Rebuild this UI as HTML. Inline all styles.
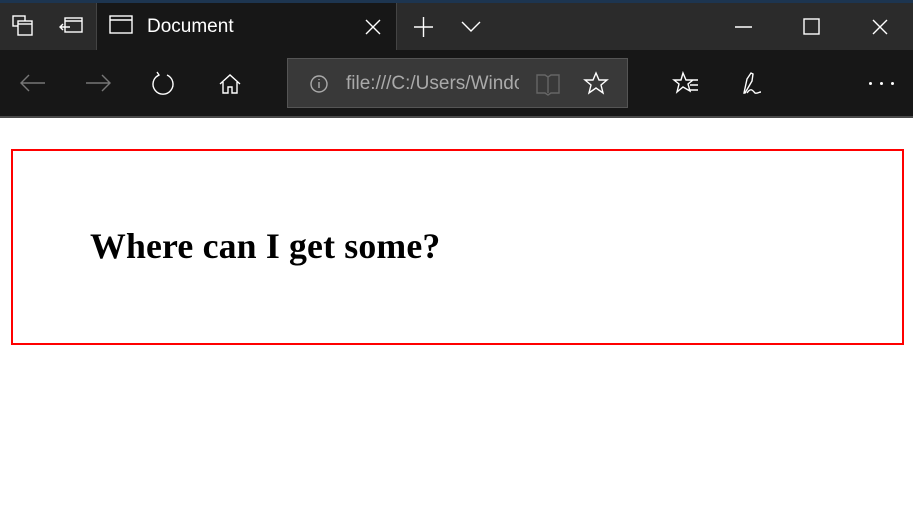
<!DOCTYPE html>
<html><head><style>
body{margin:0;width:913px;height:514px;overflow:hidden;background:#fff;font-family:"Liberation Sans",sans-serif;position:relative}
.a{position:absolute}
svg{position:absolute;overflow:visible}
</style></head><body>
<div class="a" style="left:0;top:0;width:913px;height:3px;background:#1d3550"></div>
<div class="a" style="left:0;top:3px;width:913px;height:47px;background:#2b2b2b"></div>
<div class="a" style="left:96px;top:3px;width:301px;height:47px;background:#171717;border-left:1px solid #444;border-right:1px solid #444;box-sizing:border-box"></div>
<div class="a" style="left:0;top:50px;width:913px;height:66px;background:#171717"></div>
<div class="a" style="left:0;top:116px;width:913px;height:2px;background:#4a4a4a"></div>
<div class="a" style="left:287px;top:58px;width:341px;height:50px;background:#393939;border:1px solid #555;box-sizing:border-box"></div>
<div class="a" style="left:147px;top:16px;color:#fff;font-size:19px">Document</div>
<div class="a" style="left:346px;top:73px;color:#aaa;font-size:19px;width:173px;overflow:hidden;white-space:nowrap">file:///C:/Users/Windows</div>
<svg width="913" height="120" style="left:0;top:0" fill="none" stroke="#fff" stroke-width="1.4">
<rect x="13" y="16" width="12" height="10"/><rect x="18" y="21" width="14" height="14" fill="#2b2b2b"/><line x1="18" y1="24" x2="32" y2="24"/>
<rect x="65" y="18" width="17" height="14"/><line x1="65" y1="21" x2="82" y2="21"/><path d="M60 27h10M63 24l-3 3 3 3"/>
<rect x="110" y="16" width="22" height="17"/><line x1="110" y1="20" x2="132" y2="20"/>
<path d="M366 20l14 14M380 20l-14 14"/>
<path d="M414 27h19M423.5 17v20"/>
<path d="M462 22l9 9 9-9"/>
<path d="M735 27h17"/><rect x="804" y="19" width="15" height="15"/><path d="M873 20l14 14M887 20l-14 14"/>
<path d="M21 83h24M29 75l-8 8 8 8" stroke="#777"/><path d="M86 83h24M102 75l8 8-8 8" stroke="#777"/>
<path d="M159 75a10 10 0 1 0 8 0M157 72l2 3-3 2"/>
<path d="M220 84l10-9 10 9M223 82v11h5v-6h4v6h5v-11"/>
<circle cx="319" cy="84" r="8" stroke="#aaa"/><path d="M319 82v6M319 79v1" stroke="#aaa"/>
<path d="M537 75h8l3 2 3-2h8v18h-8l-3 2-3-2h-8zM548 77v16" stroke="#666"/>
<path d="M596 73l3 7h8l-6 5 2 8-7-5-7 5 2-8-6-5h8z"/>
<path d="M683 73l3 7h7l-5 4 2 7-7-4-6 5 2-8-5-4h7zM689 80h9M690 85h8M688 90h10"/>
<path d="M744 93l3-14 4-6 2 1-1 7-7 12zM747 93c4-6 6-2 8 0 2 1 4-1 6-1"/>
</svg>
<div class="a" style="left:869px;top:82px;width:3px;height:3px;background:#fff;border-radius:50%;box-shadow:11px 0 #fff,22px 0 #fff"></div>
<div class="a" style="left:11px;top:149px;width:893px;height:196px;border:2px solid #f00;box-sizing:border-box"></div>
<div class="a" style="left:90px;top:225px;font-family:'Liberation Serif',serif;font-weight:bold;font-size:35.8px;letter-spacing:0.15px;color:#000">Where can I get some?</div>
</body></html>
